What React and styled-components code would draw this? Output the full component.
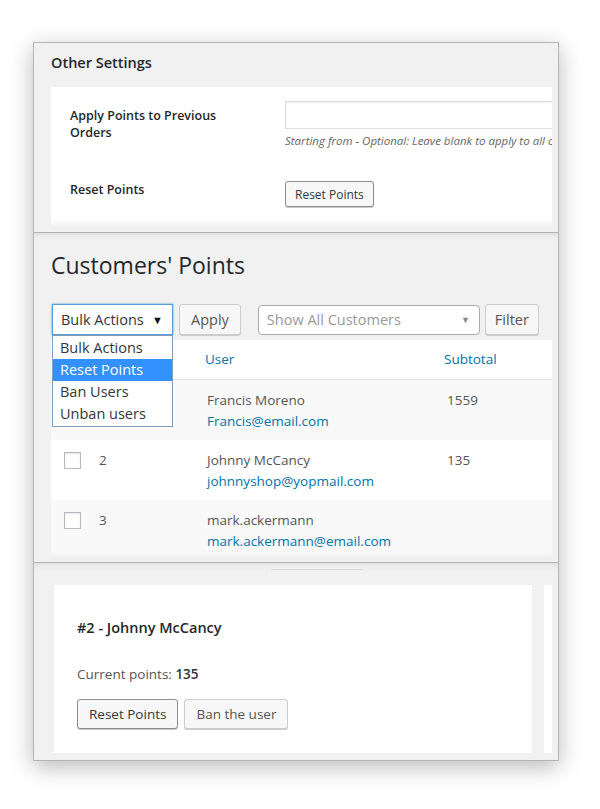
import React from 'react'
import styled, { createGlobalStyle } from 'styled-components'

const GlobalStyle = createGlobalStyle`
  html, body {
    margin: 0;
    background: #fff;
  }
  body {
    font-family: "Open Sans", "Noto Sans", sans-serif;
    color: #444;
  }
`

const Page = styled.div`
  padding: 42px 0 48px 33px;
`

const Frame = styled.div`
  width: 524px;
  border: 1px solid #b4b4b4;
  background: #f1f1f1;
  box-shadow: 0 6px 22px rgba(0, 0, 0, 0.28);
`

const Panel = styled.section`
  position: relative;
  height: ${(p) => p.h}px;
  padding: 0 6px 0 17px;
  border-top: ${(p) => (p.first ? 'none' : '1px solid #b0b0b0')};
  box-shadow: ${(p) => (p.first ? 'none' : 'inset 0 6px 8px -6px rgba(0, 0, 0, 0.12)')};
`

const SectionTitle = styled.h3`
  margin: 0;
  height: 44px;
  padding-bottom: 5px;
  box-sizing: border-box;
  display: flex;
  align-items: center;
  font-size: 14.5px;
  font-weight: 600;
  color: #23282d;
`

const FormBox = styled.div`
  background: #fff;
  height: 141px;
  overflow: hidden;
  box-shadow: inset 0 -10px 8px -6px rgba(0, 0, 0, 0.07);
`

const FormRow = styled.div`
  display: grid;
  grid-template-columns: 234px 1fr;
  padding: ${(p) => p.pad};
`

const Label = styled.div`
  padding-left: 19px;
  font-size: 12.5px;
  font-weight: 600;
  line-height: 17px;
  color: #23282d;
  padding-top: ${(p) => p.top || 0}px;
`

const Field = styled.div`
  display: flex;
  flex-direction: column;
  align-items: flex-start;
  min-width: 0;
`

const TextInput = styled.div`
  width: 320px;
  height: 28px;
  box-sizing: border-box;
  border: 1px solid #ddd;
  box-shadow: inset 0 1px 2px rgba(0, 0, 0, 0.07);
  background: #fff;
`

const Description = styled.p`
  margin: 4px 0 0;
  font-size: 11.5px;
  font-style: italic;
  color: #666;
  white-space: nowrap;
`

const Button = styled.button`
  font-family: inherit;
  height: ${(p) => p.h || 26}px;
  margin-top: ${(p) => p.mt || 0}px;
  padding: 0 ${(p) => p.px || 10}px;
  font-size: ${(p) => p.fs || 13}px;
  color: ${(p) => (p.strong ? '#32373c' : '#555')};
  background: #f7f7f7;
  border: 1px solid ${(p) => (p.strong ? '#8c8c8c' : '#cccccc')};
  border-radius: 3px;
  box-shadow: 0 1px 0 #ccc;
  cursor: pointer;
`

const PageTitle = styled.h1`
  margin: 0;
  padding-top: 16px;
  height: 54px;
  box-sizing: border-box;
  font-size: 23px;
  font-weight: 400;
  color: #23282d;
`

const Toolbar = styled.div`
  display: flex;
  align-items: center;
  height: 31px;
  margin-top: 17px;
  padding-left: 1px;
`

const SelectWrap = styled.div`
  position: relative;
  margin-right: ${(p) => p.mr || 0}px;
`

const Select = styled.div`
  box-sizing: border-box;
  width: ${(p) => p.w}px;
  height: ${(p) => p.h || 31}px;
  display: flex;
  align-items: center;
  justify-content: space-between;
  padding: 0 9px 0 8px;
  background: #fff;
  border: 1px solid ${(p) => (p.focus ? '#5b9dd9' : '#aaa')};
  border-radius: ${(p) => (p.focus ? 0 : 4)}px;
  box-shadow: ${(p) => (p.focus ? '0 0 2px rgba(30, 140, 190, 0.8)' : 'none')};
  font-size: 14.5px;
  color: ${(p) => (p.muted ? '#999' : '#32373c')};
`

const Caret = styled.span`
  font-size: ${(p) => p.size}px;
  color: ${(p) => p.color};
  line-height: 1;
`

const Menu = styled.ul`
  position: absolute;
  top: 31px;
  left: 0;
  width: 121px;
  box-sizing: border-box;
  margin: 0;
  padding: 1px 0;
  list-style: none;
  background: #fff;
  border: 1px solid #7f9db9;
  z-index: 5;
`

const MenuItem = styled.li`
  height: 22px;
  line-height: 22px;
  padding-left: 7px;
  font-size: 14.5px;
  color: ${(p) => (p.active ? '#fff' : '#32373c')};
  background: ${(p) => (p.active ? '#3390ff' : 'transparent')};
`

const Table = styled.div`
  margin-top: 5px;
  width: 501px;
`

const Row = styled.div`
  display: grid;
  grid-template-columns: 40px 114px 239px 1fr;
  height: ${(p) => (p.head ? 39 : 60)}px;
  background: ${(p) => (p.alt ? '#f9f9f9' : '#fff')};
  border-bottom: ${(p) => (p.head ? '1px solid #e1e1e1' : 'none')};
  align-items: ${(p) => (p.head ? 'center' : 'start')};
  box-shadow: ${(p) => (p.last ? 'inset 0 -8px 8px -6px rgba(0,0,0,0.08)' : 'none')};
`

const Cell = styled.div`
  padding: ${(p) => (p.head ? '0' : '10px 0 0')};
  padding-left: ${(p) => p.pl || 0}px;
  font-size: 13.5px;
  line-height: 21px;
  color: ${(p) => (p.link ? '#0073aa' : '#555')};
`

const Check = styled.span`
  display: block;
  width: 17px;
  height: 17px;
  box-sizing: border-box;
  margin: 12px 0 0 13px;
  border: 1px solid #b4b9be;
  background: #fff;
  box-shadow: inset 0 1px 2px rgba(0, 0, 0, 0.1);
`

const Email = styled.div`
  color: #0073aa;
`

const Grip = styled.div`
  position: absolute;
  top: 6px;
  left: 237px;
  width: 92px;
  height: 1px;
  background: #dcdcdc;
`

const CardRow = styled.div`
  display: flex;
  gap: 12px;
  padding: 22px 0 0 3px;
`

const Card = styled.div`
  width: 478px;
  height: 168px;
  box-sizing: border-box;
  background: #fff;
  padding: 32px 0 0 23px;
`

const Strip = styled.div`
  width: 8px;
  height: 168px;
  background: #fff;
`

const CardTitle = styled.h2`
  margin: 0;
  font-size: 14.5px;
  font-weight: 600;
  line-height: 22px;
  color: #23282d;
`

const Points = styled.p`
  margin: 25px 0 0;
  font-size: 13.5px;
  line-height: 20px;
  color: #555;
  b {
    font-weight: 600;
    color: #333;
  }
`

const Actions = styled.div`
  display: flex;
  gap: 6px;
  margin-top: 15px;
`

const users = [
  { id: 1, name: 'Francis Moreno', email: 'Francis@email.com', total: '1559' },
  { id: 2, name: 'Johnny McCancy', email: 'johnnyshop@yopmail.com', total: '135' },
  { id: 3, name: 'mark.ackermann', email: 'mark.ackermann@email.com', total: '' },
]

export default function App() {
  return (
    <Page>
      <GlobalStyle />
      <Frame>
        <Panel first h={189}>
          <SectionTitle>Other Settings</SectionTitle>
          <FormBox>
            <FormRow pad="14px 0 0">
              <Label top={6}>
                Apply Points to Previous
                <br />
                Orders
              </Label>
              <Field>
                <TextInput />
                <Description>
                  Starting from - Optional: Leave blank to apply to all orders
                </Description>
              </Field>
            </FormRow>
            <FormRow pad="30px 0 0">
              <Label top={3}>Reset Points</Label>
              <Field>
                <Button strong mt={3} fs={12} px={9}>
                  Reset Points
                </Button>
              </Field>
            </FormRow>
          </FormBox>
        </Panel>

        <Panel h={329}>
          <PageTitle>Customers' Points</PageTitle>
          <Toolbar>
            <SelectWrap mr={6}>
              <Select w={121} focus>
                Bulk Actions
                <Caret size={11} color="#111">▼</Caret>
              </Select>
              <Menu>
                <MenuItem>Bulk Actions</MenuItem>
                <MenuItem active>Reset Points</MenuItem>
                <MenuItem>Ban Users</MenuItem>
                <MenuItem>Unban users</MenuItem>
              </Menu>
            </SelectWrap>
            <SelectWrap mr={17}>
              <Button h={31} px={11} fs={14.5}>
                Apply
              </Button>
            </SelectWrap>
            <SelectWrap mr={5}>
              <Select w={222} h={30} muted>
                Show All Customers
                <Caret size={9} color="#888">▼</Caret>
              </Select>
            </SelectWrap>
            <Button h={31} px={9} fs={14.5}>
              Filter
            </Button>
          </Toolbar>
          <Table>
            <Row head>
              <Cell head />
              <Cell head />
              <Cell head link>
                User
              </Cell>
              <Cell head link>
                Subtotal
              </Cell>
            </Row>
            {users.map((u, i) => (
              <Row key={u.id} alt={i % 2 === 0} last={i === users.length - 1}>
                <Check />
                <Cell pl={8}>{u.id}</Cell>
                <Cell pl={2}>
                  {u.name}
                  <Email>{u.email}</Email>
                </Cell>
                <Cell pl={3}>{u.total}</Cell>
              </Row>
            ))}
          </Table>
        </Panel>

        <Panel h={197}>
          <Grip />
          <CardRow>
            <Card>
              <CardTitle>#2 - Johnny McCancy</CardTitle>
              <Points>
                Current points: <b>135</b>
              </Points>
              <Actions>
                <Button h={30} px={11} fs={13.5} strong>
                  Reset Points
                </Button>
                <Button h={30} px={11} fs={13.5}>
                  Ban the user
                </Button>
              </Actions>
            </Card>
            <Strip />
          </CardRow>
        </Panel>
      </Frame>
    </Page>
  )
}
